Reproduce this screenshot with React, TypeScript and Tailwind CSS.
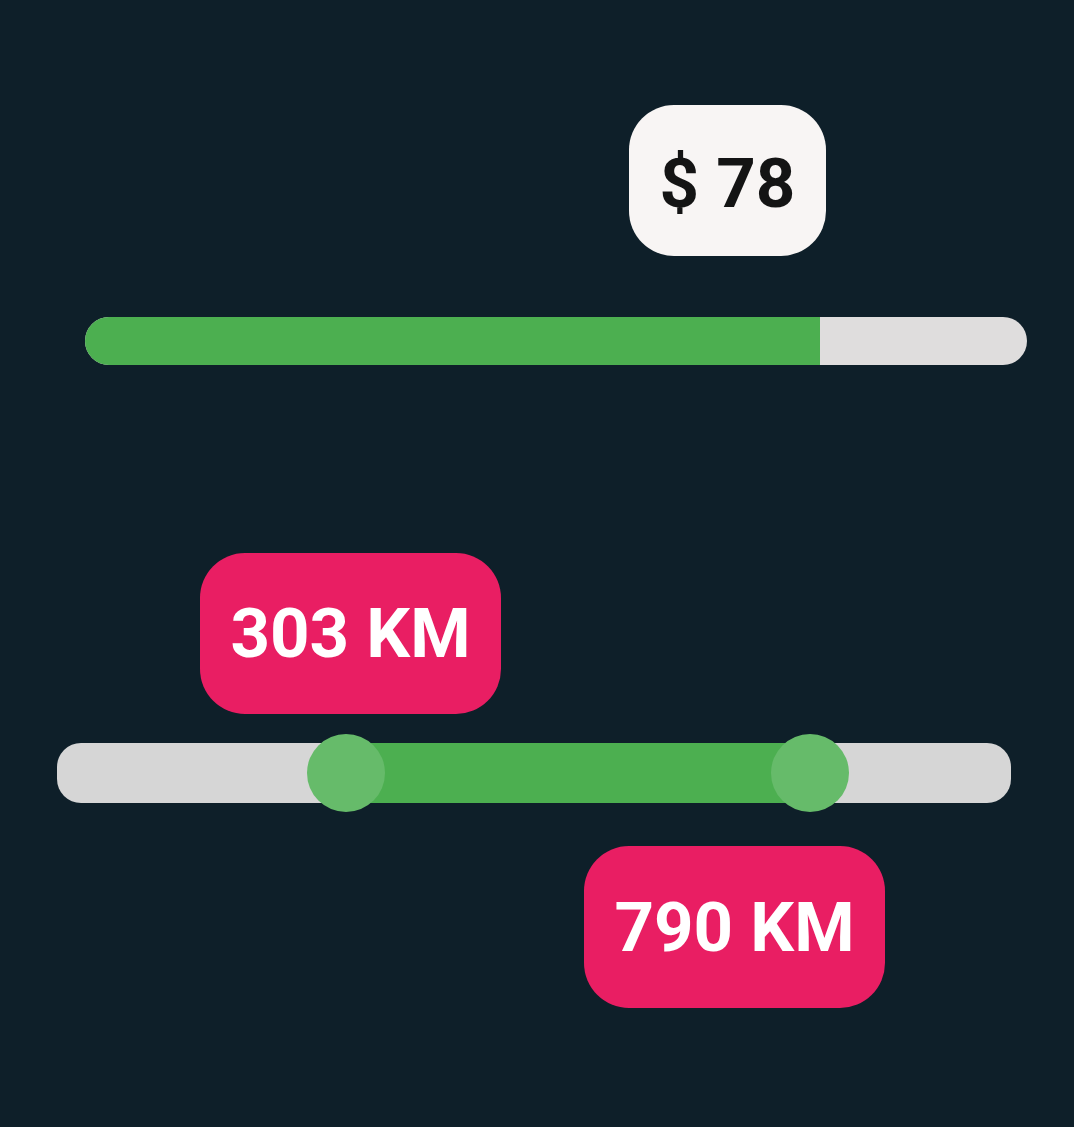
export default function App() {
  return (
    <div className="h-[1127px] w-full overflow-hidden bg-[#0e1f29] font-['Roboto',sans-serif]">
      <div className="pt-[105px]">
        <div className="ml-[629px] flex h-[151px] w-[197px] items-center justify-center rounded-[45px] bg-[#f8f5f4] pt-[6px]">
          <span className="text-[69px] font-bold leading-none text-[#141414]">$ 78</span>
        </div>
      </div>

      {/* single value slider */}
      <div className="ml-[85px] mt-[61px] flex h-[48px] w-[942px] overflow-hidden rounded-full bg-[#dfdddd]">
        <div className="h-full w-[735px] bg-[#4caf50]" />
      </div>

      <div className="ml-[200px] mt-[188px] flex h-[161px] w-[301px] items-center justify-center rounded-[45px] bg-[#e91e63]">
        <span className="text-[69px] font-bold leading-none text-white">303 KM</span>
      </div>

      {/* range slider */}
      <div className="relative ml-[57px] mt-[29px] h-[60px] w-[954px] rounded-[24px] bg-[#d6d6d6]">
        <div className="absolute left-[288px] top-0 h-full w-[465px] bg-[#4caf50]" />
        <div className="absolute left-[250px] top-[-9px] h-[78px] w-[78px] rounded-full bg-[#66bb6a]" />
        <div className="absolute left-[714px] top-[-9px] h-[78px] w-[78px] rounded-full bg-[#66bb6a]" />
      </div>

      <div className="ml-[584px] mt-[43px] flex h-[162px] w-[301px] items-center justify-center rounded-[45px] bg-[#e91e63]">
        <span className="text-[69px] font-bold leading-none text-white">790 KM</span>
      </div>
    </div>
  );
}
